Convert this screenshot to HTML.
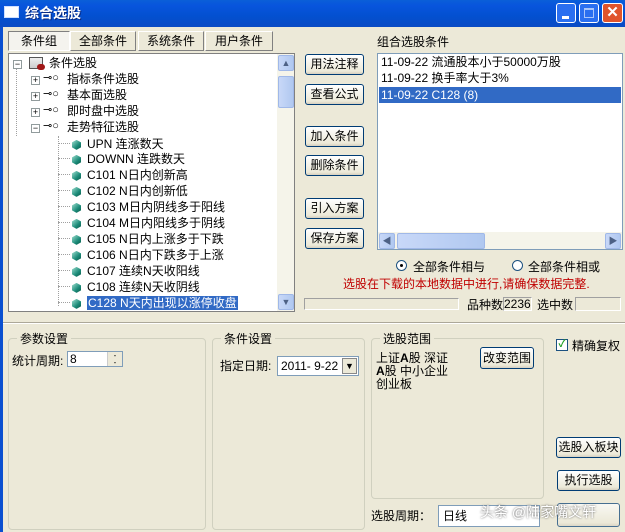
<!DOCTYPE html>
<html><head><meta charset="utf-8"><style>
*{margin:0;padding:0;box-sizing:border-box}
body{width:625px;height:532px;overflow:hidden;background:#ece9d8;font-family:"Liberation Sans","Noto Sans CJK SC",sans-serif;font-size:12px;color:#000;position:relative}
.a{position:absolute;white-space:nowrap}
.title{left:0;top:0;width:625px;height:27px;background:linear-gradient(#0a5fd8,#0855dd 20%,#0350d0 60%,#0a4bc4);}
.lb{left:0;top:27px;width:3px;height:505px;background:#0a4fd0}
.btn{position:absolute;border:1px solid #003c74;border-radius:3px;background:linear-gradient(#fff,#ece9d8 85%,#d6d0c0);text-align:center;font-size:12px;line-height:18px}
.tab{position:absolute;top:31px;height:20px;border:1px solid #fff;border-right-color:#808080;border-bottom-color:#808080;background:#ece9d8;text-align:center;line-height:18px;font-size:12px}
.box{position:absolute;background:#fff;border:1px solid #7f9db9}
.row{position:absolute;height:16px;line-height:16px}
.gb{position:absolute;border:1px solid #d0d0bf;border-radius:4px}
.gl{position:absolute;background:#ece9d8;padding:0 3px;top:-9px;left:8px;font-size:12px}
.gem{display:inline-block;width:9px;height:10px;background:linear-gradient(135deg,#9fe0d0,#1b8a78 60%,#0b5a4a);clip-path:polygon(50% 0,100% 25%,100% 75%,50% 100%,0 75%,0 25%);vertical-align:middle;margin-right:6px}
.pm{position:absolute;width:9px;height:9px;border:1px solid #919b9c;background:#fff;font-size:9px;line-height:7px;text-align:center}
.key{position:absolute;font-size:11px}
.dot{position:absolute;border-top:1px dotted #a0a0a0;height:0}
.vs{position:absolute;border-left:1px dotted #a0a0a0;width:0}
.sb{position:absolute;background:#f5f4ea}
.sbb{position:absolute;background:linear-gradient(90deg,#c8d8f8,#b0c8f0);border:1px solid #a0b8e8;border-radius:2px}
.d{position:relative;display:inline-block;width:12px;top:-4px;margin-right:2px;border-top:1px dotted #a0a0a0;height:0}
</style></head><body>
<div class="a title"></div>
<div class="a" style="left:4px;top:6px;width:15px;height:12px;background:#fff;border:1px solid #cfe0ff"></div>
<div class="a" style="left:25px;top:4px;color:#fff;font-weight:bold;font-size:14px;line-height:18px;text-shadow:1px 1px #0a2a80">综合选股</div>
<div class="a" style="left:556px;top:3px;width:20px;height:20px;border:1px solid #fff;border-radius:3px;background:#2a6ff0"><div class="a" style="left:5px;top:12px;width:7px;height:3px;background:#fff"></div></div>
<div class="a" style="left:579px;top:3px;width:20px;height:20px;border:1px solid #fff;border-radius:3px;background:#2a6ff0"><div class="a" style="left:4px;top:4px;width:10px;height:10px;border:1px solid #fff;border-top-width:2px;opacity:.6"></div></div>
<div class="a" style="left:602px;top:3px;width:21px;height:20px;border:1px solid #fff;border-radius:3px;background:#e0542c;color:#fff;font-weight:bold;font-size:15px;text-align:center;line-height:18px">✕</div>
<div class="a lb"></div>

<div class="tab" style="left:8px;width:62px;background:#f4f3ee;border-color:#808080 #fff #fff #808080">条件组</div>
<div class="tab" style="left:70px;width:66px">全部条件</div>
<div class="tab" style="left:138px;width:66px">系统条件</div>
<div class="tab" style="left:205px;width:68px">用户条件</div>

<div class="box" style="left:8px;top:53px;width:287px;height:259px;border-color:#808080">
 <div class="vs" style="left:7px;top:12px;height:70px"></div>
 <div class="vs" style="left:49px;top:82px;height:170px"></div>
 <div class="pm" style="left:4px;top:6px">−</div>
 <div class="a" style="left:20px;top:3px;width:14px;height:12px;border:1px solid #555;background:linear-gradient(#eee,#ccc)"><div class="a" style="left:7px;top:6px;width:8px;height:6px;background:#a01818;border-radius:3px"></div></div>
 <div class="row" style="left:40px;top:1px">条件选股</div>
 <div class="pm" style="left:22px;top:22px">+</div><div class="key" style="left:34px;top:17px">⊸○</div><div class="row" style="left:58px;top:17px">指标条件选股</div>
 <div class="pm" style="left:22px;top:38px">+</div><div class="key" style="left:34px;top:33px">⊸○</div><div class="row" style="left:58px;top:33px">基本面选股</div>
 <div class="pm" style="left:22px;top:54px">+</div><div class="key" style="left:34px;top:49px">⊸○</div><div class="row" style="left:58px;top:49px">即时盘中选股</div>
 <div class="pm" style="left:22px;top:70px">−</div><div class="key" style="left:34px;top:65px">⊸○</div><div class="row" style="left:58px;top:65px">走势特征选股</div>
 <div class="row" style="left:49px;top:82px"><span class="d"></span><span class="gem"></span>UPN 连涨数天</div>
 <div class="row" style="left:49px;top:97px"><span class="d"></span><span class="gem"></span>DOWNN 连跌数天</div>
 <div class="row" style="left:49px;top:113px"><span class="d"></span><span class="gem"></span>C101 N日内创新高</div>
 <div class="row" style="left:49px;top:129px"><span class="d"></span><span class="gem"></span>C102 N日内创新低</div>
 <div class="row" style="left:49px;top:145px"><span class="d"></span><span class="gem"></span>C103 M日内阴线多于阳线</div>
 <div class="row" style="left:49px;top:161px"><span class="d"></span><span class="gem"></span>C104 M日内阳线多于阴线</div>
 <div class="row" style="left:49px;top:177px"><span class="d"></span><span class="gem"></span>C105 N日内上涨多于下跌</div>
 <div class="row" style="left:49px;top:193px"><span class="d"></span><span class="gem"></span>C106 N日内下跌多于上涨</div>
 <div class="row" style="left:49px;top:209px"><span class="d"></span><span class="gem"></span>C107 连续N天收阳线</div>
 <div class="row" style="left:49px;top:225px"><span class="d"></span><span class="gem"></span>C108 连续N天收阴线</div>
 <div class="row" style="left:49px;top:241px"><span class="d"></span><span class="gem"></span><span style="background:#316ac5;color:#fff;padding:0 1px">C128 N天内出现以涨停收盘</span></div>
 <div class="sb" style="left:268px;top:0;width:17px;height:257px"></div>
 <div class="sbb" style="left:269px;top:1px;width:16px;height:16px;text-align:center;font-size:9px;color:#4d6185;line-height:14px">▲</div>
 <div class="sbb" style="left:269px;top:22px;width:16px;height:32px"></div>
 <div class="sbb" style="left:269px;top:240px;width:16px;height:16px;text-align:center;font-size:9px;color:#4d6185;line-height:14px">▼</div>
</div>

<div class="btn" style="left:305px;top:54px;width:59px;height:21px">用法注释</div>
<div class="btn" style="left:305px;top:84px;width:59px;height:21px">查看公式</div>
<div class="btn" style="left:305px;top:126px;width:59px;height:21px">加入条件</div>
<div class="btn" style="left:305px;top:155px;width:59px;height:21px">删除条件</div>
<div class="btn" style="left:305px;top:198px;width:59px;height:21px">引入方案</div>
<div class="btn" style="left:305px;top:228px;width:59px;height:21px">保存方案</div>

<div class="a" style="left:377px;top:33px">组合选股条件</div>
<div class="box" style="left:377px;top:53px;width:246px;height:197px">
 <div class="row" style="left:3px;top:0">11-09-22 流通股本小于50000万股</div>
 <div class="row" style="left:3px;top:16px">11-09-22 换手率大于3%</div>
 <div class="row" style="left:1px;top:33px;width:242px;background:#316ac5;color:#fff;padding-left:2px">11-09-22 C128 (8)</div>
 <div class="sb" style="left:0;top:178px;width:244px;height:17px"></div>
 <div class="sbb" style="left:1px;top:179px;width:16px;height:16px;text-align:center;font-size:9px;color:#4d6185;line-height:14px">◀</div>
 <div class="sbb" style="left:19px;top:179px;width:88px;height:16px"></div>
 <div class="sbb" style="left:227px;top:179px;width:16px;height:16px;text-align:center;font-size:9px;color:#4d6185;line-height:14px">▶</div>
</div>

<div class="a" style="left:396px;top:260px;width:11px;height:11px;border:1px solid #1c5180;border-radius:50%;background:#fff"><div class="a" style="left:3px;top:3px;width:3px;height:3px;border-radius:50%;background:#000"></div></div>
<div class="a" style="left:413px;top:258px">全部条件相与</div>
<div class="a" style="left:512px;top:260px;width:11px;height:11px;border:1px solid #1c5180;border-radius:50%;background:#fff"></div>
<div class="a" style="left:528px;top:258px">全部条件相或</div>
<div class="a" style="left:343px;top:275px;color:#c00000">选股在下载的本地数据中进行,请确保数据完整.</div>

<div class="a" style="left:304px;top:298px;width:155px;height:12px;border:1px solid #a0a0a0;border-color:#a0a0a0 #fff #fff #a0a0a0"></div>
<div class="a" style="left:467px;top:296px">品种数</div>
<div class="a" style="left:503px;top:297px;width:29px;height:14px;border:1px solid #a0a0a0;border-color:#a0a0a0 #fff #fff #a0a0a0;line-height:12px">2236</div>
<div class="a" style="left:537px;top:296px">选中数</div>
<div class="a" style="left:575px;top:297px;width:46px;height:14px;border:1px solid #a0a0a0;border-color:#a0a0a0 #fff #fff #a0a0a0"></div>

<div class="a" style="left:3px;top:322px;width:622px;height:2px;border-top:1px solid #aca899;border-bottom:1px solid #fff"></div>

<div class="gb" style="left:8px;top:338px;width:198px;height:192px"><div class="gl">参数设置</div></div>
<div class="a" style="left:12px;top:352px">统计周期:</div>
<div class="a" style="left:67px;top:351px;width:56px;height:16px;background:#fff;border:1px solid #7f9db9;line-height:14px;padding-left:2px">8</div>
<div class="a" style="left:107px;top:352px;width:15px;height:14px;background:#ece9d8;border-left:1px solid #ccc;font-size:8px;line-height:7px;text-align:center">-<br>-</div>

<div class="gb" style="left:212px;top:338px;width:153px;height:192px"><div class="gl">条件设置</div></div>
<div class="a" style="left:220px;top:357px">指定日期:</div>
<div class="a" style="left:277px;top:356px;width:82px;height:20px;background:#fff;border:1px solid #7f9db9;line-height:18px;padding-left:3px">2011- 9-22</div>
<div class="a" style="left:342px;top:358px;width:15px;height:16px;border:1px solid #888;background:#ece9d8;font-size:9px;text-align:center;line-height:14px">▼</div>

<div class="gb" style="left:371px;top:338px;width:173px;height:161px"><div class="gl">选股范围</div></div>
<div class="a" style="left:376px;top:352px;line-height:13px">上证<b>A</b>股 深证<br><b>A</b>股 中小企业<br>创业板</div>
<div class="btn" style="left:480px;top:347px;width:54px;height:22px;line-height:20px">改变范围</div>

<div class="a" style="left:556px;top:339px;width:12px;height:12px;border:1px solid #1c5180;background:#fff;color:#21a121;font-size:10px;line-height:10px;text-align:center;font-weight:bold">✓</div>
<div class="a" style="left:572px;top:337px">精确复权</div>
<div class="btn" style="left:556px;top:437px;width:65px;height:21px">选股入板块</div>
<div class="btn" style="left:557px;top:470px;width:63px;height:21px">执行选股</div>

<div class="a" style="left:371px;top:507px">选股周期：</div>
<div class="a" style="left:438px;top:505px;width:102px;height:22px;background:#fff;border:1px solid #7f9db9;line-height:20px;padding-left:4px">日线</div>
<div class="btn" style="left:557px;top:503px;width:63px;height:24px;opacity:.7"></div>
<div class="a" style="left:480px;top:502px;color:#fff;font-size:14px;text-shadow:0 0 2px #555">头条 @陆家嘴文轩</div>
</body></html>
